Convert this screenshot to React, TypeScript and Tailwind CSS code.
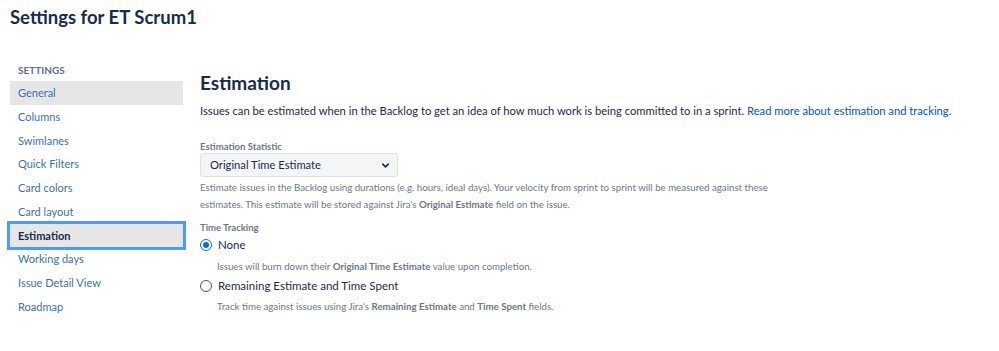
import { ChevronDown } from 'lucide-react';

const navItems = [
  'General',
  'Columns',
  'Swimlanes',
  'Quick Filters',
  'Card colors',
  'Card layout',
  'Estimation',
  'Working days',
  'Issue Detail View',
  'Roadmap',
];

const App = () => {
  return (
    <div className="min-h-[351px] w-[999px] bg-white text-[#172b4d] font-['Lato',sans-serif]">
      <h1 className="pl-[10px] pt-[3px] text-[18.5px] leading-[28px] font-bold text-[#172b4d]">
        Settings for ET Scrum1
      </h1>

      <div className="flex mt-[29px]">
        {/* Sidebar */}
        <nav className="w-[190px] shrink-0 pl-[10px]">
          <h3 className="mt-[3px] pl-[8px] text-[10px] leading-[14px] font-bold text-[#5e6c84] uppercase mb-[4px]">
            Settings
          </h3>
          <ul>
            {navItems.map(item => {
              const selected = item === 'General';
              const focused = item === 'Estimation';
              return (
                <li key={item} className="w-[173px]">
                  <a
                    className={`block h-[23.75px] pl-[8px] text-[11px] leading-[23.75px] ${
                      focused
                        ? 'bg-[#e6e6e6] font-bold text-[#172b4d] outline-[3px] outline-[#4c9aff] outline-solid'
                        : selected
                          ? 'bg-[#e6e6e6] text-[#3b6fb6]'
                          : 'text-[#3b6fb6]'
                    }`}
                  >
                    {item}
                  </a>
                </li>
              );
            })}
          </ul>
        </nav>

        {/* Main content */}
        <main className="pl-[10px] pt-[11px]">
          <h2 className="text-[19px] leading-[24px] font-bold text-[#172b4d]">Estimation</h2>
          <p className="mt-[7px] text-[11.2px] leading-[18px] text-[#172b4d] whitespace-nowrap">
            Issues can be estimated when in the Backlog to get an idea of how much work is being committed to in a
            sprint. <a className="text-[#0052cc]">Read more about estimation and tracking.</a>
          </p>

          <div className="mt-[21px]">
            <label className="block text-[9.5px] leading-[12px] font-bold text-[#6b778c]">
              Estimation Statistic
            </label>
            <div className="flex items-center justify-between w-[198px] h-[24px] rounded-[3px] border border-[#dfe1e6] bg-[#f4f5f7] pl-[9px] pr-[6px]">
              <span className="text-[11.2px] text-[#172b4d]">Original Time Estimate</span>
              <ChevronDown className="w-[11px] h-[11px] text-[#172b4d]" strokeWidth={3.5} />
            </div>
            <p className="mt-[2px] w-[572px] text-[9.7px] leading-[17px] text-[#6b778c]">
              Estimate issues in the Backlog using durations (e.g. hours, ideal days). Your velocity from sprint to
              sprint will be measured against these estimates. This estimate will be stored against Jira's{' '}
              <b className="font-bold">Original Estimate</b> field on the issue.
            </p>
          </div>

          <div className="mt-[8px]">
            <label className="block text-[9.5px] leading-[14px] font-bold text-[#6b778c]">Time Tracking</label>
            <div className="flex items-center gap-[6px] h-[20px]">
              <span className="flex items-center justify-center w-[12px] h-[12px] rounded-full border-[1.5px] border-[#0070e0]">
                <span className="w-[6px] h-[6px] rounded-full bg-[#0070e0]" />
              </span>
              <span className="text-[11.5px] text-[#172b4d]">None</span>
            </div>
            <p className="pl-[17px] mt-[3px] text-[9.7px] leading-[16px] text-[#6b778c]">
              Issues will burn down their <b className="font-bold">Original Time Estimate</b> value upon completion.
            </p>
            <div className="mt-[2px] flex items-center gap-[6px] h-[20px]">
              <span className="w-[12px] h-[12px] rounded-full border border-[#555]" />
              <span className="text-[11.5px] text-[#172b4d]">Remaining Estimate and Time Spent</span>
            </div>
            <p className="pl-[17px] mt-[2px] text-[9.7px] leading-[16px] text-[#6b778c]">
              Track time against issues using Jira's <b className="font-bold">Remaining Estimate</b> and{' '}
              <b className="font-bold">Time Spent</b> fields.
            </p>
          </div>
        </main>
      </div>
    </div>
  );
};

export default App;
